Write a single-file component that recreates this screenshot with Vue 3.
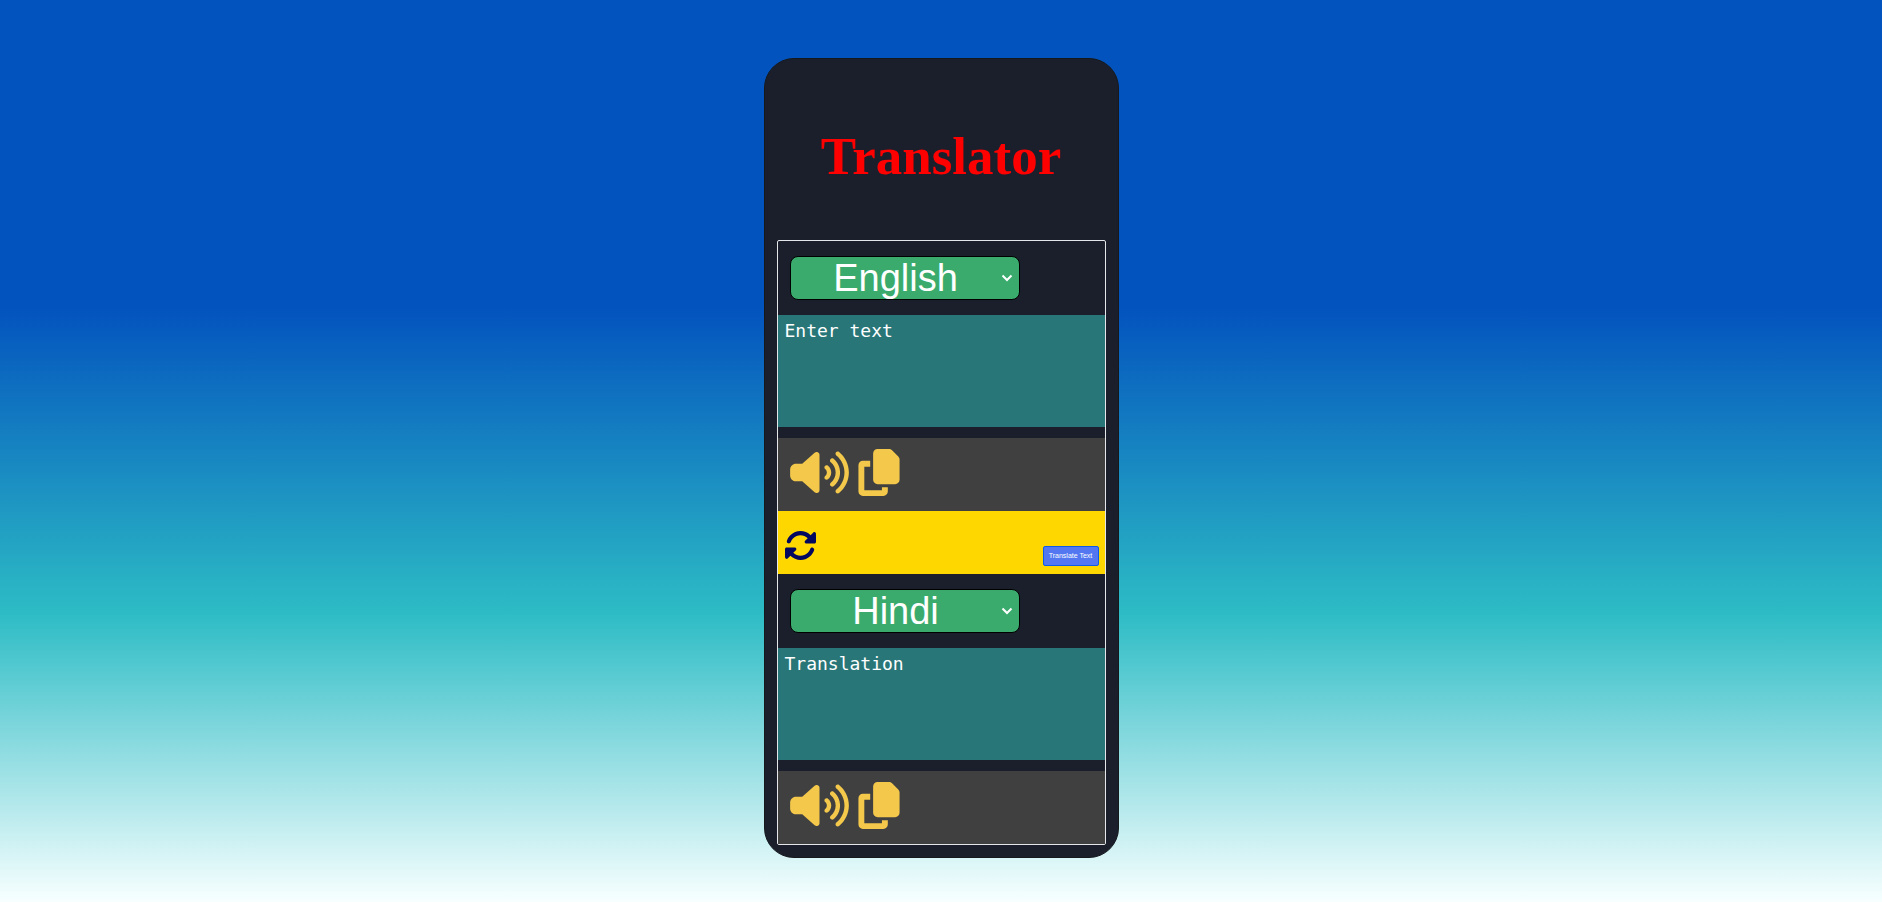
<script setup>
import { reactive } from 'vue'

const languages = ['English', 'Hindi', 'French', 'German', 'Spanish']
const panels = reactive([
  { id: 'source', label: 'Source language', language: 'English', placeholder: 'Enter text', text: '' },
  { id: 'target', label: 'Target language', language: 'Hindi', placeholder: 'Translation', text: '' },
])

function swap() {
  const [a, b] = panels
  ;[a.language, b.language] = [b.language, a.language]
  ;[a.text, b.text] = [b.text, a.text]
}
</script>

<template>
  <main class="page">
    <section class="card">
      <h1 class="title">Translator</h1>
      <div class="translator">
        <template v-for="(panel, index) in panels" :key="panel.id">
          <div class="language">
            <select v-model="panel.language" class="select" :aria-label="panel.label">
              <option v-for="name in languages" :key="name">{{ name }}</option>
            </select>
            <svg class="chevron" viewBox="0 0 12 8" aria-hidden="true"><path d="M1.5 1.5 6 6l4.5-4.5" /></svg>
          </div>
          <textarea v-model="panel.text" class="text" :placeholder="panel.placeholder" :aria-label="panel.placeholder"></textarea>
          <div class="tools">
            <button class="icon-button" type="button" aria-label="Listen">
              <svg class="speaker" viewBox="0 0 640 512" aria-hidden="true"><path d="M533.6 32.5C598.5 85.3 640 165.8 640 256s-41.5 170.8-106.4 223.5c-10.3 8.4-25.4 6.8-33.8-3.5s-6.8-25.4 3.5-33.8C557.5 398.2 592 331.2 592 256s-34.5-142.2-88.7-186.3c-10.3-8.4-11.8-23.5-3.5-33.8s23.5-11.8 33.8-3.5zM473.1 107c43.2 35.2 70.9 88.9 70.9 149s-27.7 113.8-70.9 149c-10.3 8.4-25.4 6.8-33.8-3.5s-6.8-25.4 3.5-33.8C475.3 341.3 496 301.1 496 256s-20.7-85.3-53.2-111.8c-10.3-8.4-11.8-23.5-3.5-33.8s23.5-11.8 33.8-3.5zm-60.5 74.5C434.1 199.1 448 225.9 448 256s-13.9 56.9-35.4 74.5c-10.3 8.4-25.4 6.8-33.8-3.5s-6.8-25.4 3.5-33.8C393.1 284.4 400 271 400 256s-6.9-28.4-17.7-37.3c-10.3-8.4-11.8-23.5-3.5-33.8s23.5-11.8 33.8-3.5zM301.1 34.8C312.6 40 320 51.4 320 64V448c0 12.6-7.4 24-18.9 29.2s-25 3.1-34.4-5.3L131.8 352H64c-35.3 0-64-28.7-64-64V224c0-35.3 28.7-64 64-64h67.8L266.7 40.1c9.4-8.4 22.9-10.4 34.4-5.3z" /></svg>
            </button>
            <button class="icon-button" type="button" aria-label="Copy">
              <svg class="copy" viewBox="0 0 448 512" aria-hidden="true"><path d="M208 0H332.1c12.7 0 24.9 5.1 33.9 14.1l67.9 67.9c9 9 14.1 21.2 14.1 33.9V336c0 26.5-21.5 48-48 48H208c-26.5 0-48-21.5-48-48V48c0-26.5 21.5-48 48-48zM48 128h80v64H64V448H256V416h64v48c0 26.5-21.5 48-48 48H48c-26.5 0-48-21.5-48-48V176c0-26.5 21.5-48 48-48z" /></svg>
            </button>
          </div>
          <div v-if="index === 0" class="actions">
            <button class="icon-button swap" type="button" aria-label="Swap languages" @click="swap">
              <svg class="rotate" viewBox="0 0 512 512" aria-hidden="true"><path d="M142.9 142.9c62.2-62.2 162.7-62.5 225.3-1L327 183c-6.9 6.9-8.9 17.2-5.2 26.2s12.5 14.8 22.2 14.8H463.5H472c13.3 0 24-10.7 24-24V72c0-9.7-5.8-18.5-14.8-22.2s-19.3-1.7-26.2 5.2L413.4 96.6c-87.6-86.5-228.7-86.2-315.8 1C73.2 122 55.6 150.7 44.8 181.4c-5.9 16.7 2.9 34.9 19.5 40.8s34.9-2.9 40.8-19.5c7.7-21.8 20.2-42.3 37.8-59.8zM16 312v7.6 .7V440c0 9.7 5.8 18.5 14.8 22.2s19.3 1.7 26.2-5.2l41.6-41.6c87.6 86.5 228.7 86.2 315.8-1c24.4-24.4 42.1-53.1 52.9-83.7c5.9-16.7-2.9-34.9-19.5-40.8s-34.9 2.9-40.8 19.5c-7.7 21.8-20.2 42.3-37.8 59.8c-62.2 62.2-162.7 62.5-225.3 1L185 329c6.9-6.9 8.9-17.2 5.2-26.2s-12.5-14.8-22.2-14.8H48.4h-.7H40c-13.3 0-24 10.7-24 24z" /></svg>
            </button>
            <button class="translate" type="button">Translate Text</button>
          </div>
        </template>
      </div>
    </section>
  </main>
</template>

<style>
body {
  margin: 0;
}
</style>

<style scoped>
.page {
  box-sizing: border-box;
  min-height: 100vh;
  display: flex;
  align-items: center;
  justify-content: center;
  padding: 28px 16px 14px;
  background: linear-gradient(#0353be 0%, #0353be 34%, #2dbcc5 68%, #f8ffff 100%);
}

.card {
  box-sizing: border-box;
  width: 100%;
  max-width: 355px;
  padding: 12px;
  border: 1px solid #15191c;
  border-radius: 30px;
  background: #1a1f2b;
}

.title {
  margin: 0;
  padding: 55px 0 54px;
  color: #ff0000;
  font: bold 53px/60px "Liberation Serif", serif;
  text-align: center;
}

.translator {
  display: flex;
  flex-direction: column;
  border: 1px solid #e4e6ea;
  border-radius: 2px;
}

.language {
  display: grid;
  grid-template-columns: 230px;
  align-items: center;
  padding: 15px 12px;
}

.select {
  grid-area: 1 / 1;
  appearance: none;
  height: 44px;
  padding: 0 18px 0 0;
  border: 1px solid #000000;
  border-radius: 8px;
  background: #3aab6d;
  color: #ffffff;
  font: 38px/42px "Liberation Sans", Arial, sans-serif;
  text-align: center;
  text-align-last: center;
}

.chevron {
  grid-area: 1 / 1;
  justify-self: end;
  width: 12px;
  height: 8px;
  margin-right: 7px;
  fill: none;
  stroke: #ffffff;
  stroke-width: 2;
  pointer-events: none;
}

.text {
  box-sizing: border-box;
  width: 100%;
  height: 112px;
  margin-bottom: 11px;
  padding: 5px 7px;
  border: 0;
  border-radius: 0;
  background: #287678;
  color: #ffffff;
  font: 18px/22px "DejaVu Sans Mono", monospace;
  resize: none;
}

.text::placeholder {
  color: #ffffff;
  opacity: 1;
}

.tools {
  display: flex;
  align-items: center;
  gap: 9px;
  padding: 11px 12px 15px;
  background: #404040;
}

.icon-button {
  display: block;
  padding: 0;
  border: 0;
  background: none;
  color: #f3c84b;
  cursor: pointer;
}

.icon-button svg {
  display: block;
  fill: currentColor;
}

.speaker {
  width: 59px;
  height: 47px;
}

.copy {
  width: 42px;
  height: 47px;
}

.actions {
  display: flex;
  align-items: flex-end;
  justify-content: space-between;
  padding: 18px 6px 8px;
  background: #ffd700;
}

.swap {
  padding-bottom: 4px;
  color: #02075f;
}

.rotate {
  width: 33px;
  height: 33px;
}

.translate {
  box-sizing: border-box;
  width: 56px;
  height: 20px;
  padding: 0;
  border: 1px solid #0d5be8;
  border-radius: 2px;
  background: #5277f0;
  color: #ffffff;
  font: 7px/16px "Liberation Sans", Arial, sans-serif;
  white-space: nowrap;
}
</style>
